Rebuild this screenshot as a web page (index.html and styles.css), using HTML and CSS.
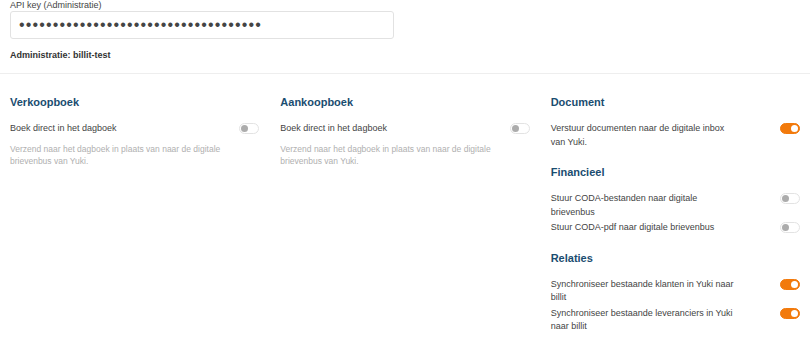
FILE: index.html
```html
<!DOCTYPE html>
<html lang="nl">

<head>
    <meta charset="UTF-8">
    <meta name="viewport" content="width=device-width, initial-scale=1.0">
    <title>Yuki koppeling</title>
    <link rel="stylesheet" href="styles.css">
</head>

<body>
    <div class="connection">
        <label for="api-key">API key (Administratie)</label>
        <input type="password" id="api-key" value="abcdefghijklmnopqrstuvwxyz0123456789" readonly>
        <div class="administration">Administratie: billit-test</div>
    </div>

    <div class="settings">
        <div class="column">
            <div class="section">
                <h3>Verkoopboek</h3>
                <div class="setting">
                    <span class="setting-label">Boek direct in het dagboek</span>
                    <span class="toggle"></span>
                </div>
                <div class="setting-help">
                    Verzend naar het dagboek in plaats van naar de digitale brievenbus van Yuki.
                </div>
            </div>
        </div>

        <div class="column">
            <div class="section">
                <h3>Aankoopboek</h3>
                <div class="setting">
                    <span class="setting-label">Boek direct in het dagboek</span>
                    <span class="toggle"></span>
                </div>
                <div class="setting-help">
                    Verzend naar het dagboek in plaats van naar de digitale brievenbus van Yuki.
                </div>
            </div>
        </div>

        <div class="column">
            <div class="section">
                <h3>Document</h3>
                <div class="setting">
                    <span class="setting-label">Verstuur documenten naar de digitale inbox van Yuki.</span>
                    <span class="toggle on"></span>
                </div>
            </div>
            <div class="section">
                <h3>Financieel</h3>
                <div class="setting">
                    <span class="setting-label">Stuur CODA-bestanden naar digitale brievenbus</span>
                    <span class="toggle"></span>
                </div>
                <div class="setting">
                    <span class="setting-label">Stuur CODA-pdf naar digitale brievenbus</span>
                    <span class="toggle"></span>
                </div>
            </div>
            <div class="section">
                <h3>Relaties</h3>
                <div class="setting">
                    <span class="setting-label">Synchroniseer bestaande klanten in Yuki naar billit</span>
                    <span class="toggle on"></span>
                </div>
                <div class="setting">
                    <span class="setting-label">Synchroniseer bestaande leveranciers in Yuki naar billit</span>
                    <span class="toggle on"></span>
                </div>
            </div>
        </div>
    </div>
</body>

</html>
```

FILE: styles.css
```css
body {
    margin: 0;
    font-family: "Liberation Sans", Arial, sans-serif;
    color: #444;
    background: #fff;
}

.connection {
    padding: 0 10px 12px;
    border-bottom: 1px solid #eee;
}

.connection label {
    display: block;
    font-size: 9px;
    line-height: 11px;
    color: #444;
}

.connection input {
    display: block;
    width: 384px;
    height: 28px;
    box-sizing: border-box;
    border: 1px solid #e2e2e2;
    border-radius: 3px;
    padding: 0 8px;
    font-family: "Liberation Sans", Arial, sans-serif;
    font-size: 16px;
    letter-spacing: 1.15px;
    color: #444;
    outline: none;
}

.administration {
    margin-top: 11px;
    font-size: 9px;
    line-height: 11px;
    font-weight: bold;
    color: #333;
}

.settings {
    display: flex;
    gap: 21px;
    padding: 21px 10px 0;
}

.column {
    flex: 1;
    display: flex;
    flex-direction: column;
    gap: 14px;
}

.section h3 {
    margin: 0 0 13px;
    font-size: 11px;
    line-height: 14px;
    color: #1a4d70;
}

.setting {
    display: flex;
    justify-content: space-between;
    align-items: flex-start;
    margin-bottom: 2px;
}

.setting-label {
    width: 75%;
    font-size: 9px;
    line-height: 13.5px;
    color: #444;
}

.setting-help {
    margin-top: 7px;
    font-size: 8.5px;
    line-height: 12px;
    color: #b0b0b0;
}

.toggle {
    position: relative;
    width: 20px;
    height: 11px;
    margin-top: 1px;
    box-sizing: border-box;
    border: 1px solid #e3e3e3;
    border-radius: 6px;
    background: #fff;
}

.toggle::after {
    content: "";
    position: absolute;
    top: 1px;
    left: 1px;
    width: 7px;
    height: 7px;
    border-radius: 50%;
    background: #acacac;
}

.toggle.on {
    border-color: #f27a0c;
    background: #f27a0c;
}

.toggle.on::after {
    left: auto;
    right: 1px;
    background: #fff;
}
```
